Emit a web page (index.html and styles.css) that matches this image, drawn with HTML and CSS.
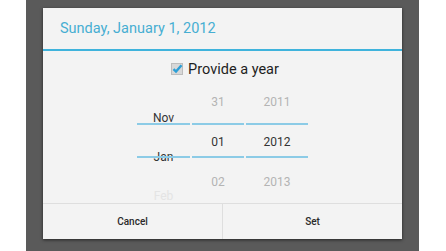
FILE: index.html
```html
<!DOCTYPE html>
<html lang="en">
<head>
  <meta charset="UTF-8">
  <title>Date picker</title>
  <link rel="stylesheet" href="styles.css">
</head>
<body>
  <div class="screen">
    <div class="dialog">
      <div class="title">Sunday, January 1, 2012</div>

      <div class="year-row">
        <svg class="check" width="12" height="12" viewBox="0 0 12 12">
          <rect x="0.5" y="0.5" width="11" height="11" fill="#d8d8d8" stroke="#bdbdbd"/>
          <path d="M2.5 6.2 L5 8.6 L10.5 2.2" fill="none" stroke="#2c9fd6" stroke-width="2.4"/>
        </svg>
        <span>Provide a year</span>
      </div>

      <div class="picker">
        <div class="col month">
          <div class="list">
            <div class="item">Nov</div>
            <div class="item">Jan</div>
            <div class="item faint">Feb</div>
          </div>
        </div>
        <div class="col day">
          <div class="list">
            <div class="item dim">31</div>
            <div class="item">01</div>
            <div class="item dim">02</div>
          </div>
        </div>
        <div class="col year">
          <div class="list">
            <div class="item dim">2011</div>
            <div class="item">2012</div>
            <div class="item dim">2013</div>
          </div>
        </div>
      </div>

      <div class="buttons">
        <div class="btn">Cancel</div>
        <div class="btn">Set</div>
      </div>
    </div>
  </div>
</body>
</html>
```
FILE: styles.css
```css
body {
  margin: 0;
  padding: 0;
  background: #ffffff;
  font-family: Roboto, "Noto Sans", sans-serif;
}

.screen {
  width: 359px;
  height: 243px;
  margin-left: 26px;
  padding: 8px 17px 0;
  background: #5a5a5a;
}

.dialog {
  height: 231px;
  background: #f3f3f3;
  display: flex;
  flex-direction: column;
  box-shadow: 0 1px 3px rgba(0, 0, 0, 0.6);
}

.title {
  height: 41px;
  line-height: 42px;
  padding-left: 17px;
  font-size: 14.5px;
  color: #46aed2;
  border-bottom: 2px solid #3fb3dc;
}

.year-row {
  height: 36px;
  display: flex;
  align-items: center;
  justify-content: center;
  gap: 5px;
  padding-left: 5px;
  font-size: 14.5px;
  color: #1e1e1e;
}

.picker {
  height: 116px;
  display: flex;
  justify-content: center;
  gap: 2px;
}

.col {
  position: relative;
  height: 116px;
  overflow: hidden;
  text-align: center;
  font-size: 12px;
  color: #333;
}

.col::before,
.col::after {
  content: "";
  position: absolute;
  left: 0;
  right: 0;
  height: 2px;
  background: #8ccbe6;
}

.col::before {
  top: 36px;
}

.col::after {
  top: 69px;
}

.month { width: 53px; }
.day { width: 52px; }
.year { width: 62px; }

.item {
  height: 40px;
  line-height: 40px;
}

.month .item {
  height: 39px;
  line-height: 39px;
}

.month .list { margin-top: 12px; }
.day .list,
.year .list { margin-top: -5px; }

.dim { color: #b4b4b4; }
.faint { color: #e4e4e4; }

.buttons {
  flex: 1;
  display: flex;
  border-top: 1px solid #dedede;
}

.btn {
  flex: 1;
  display: flex;
  align-items: center;
  justify-content: center;
  font-size: 10px;
  font-weight: 500;
  color: #2a2a2a;
}

.btn + .btn {
  border-left: 1px solid #dedede;
}
```
